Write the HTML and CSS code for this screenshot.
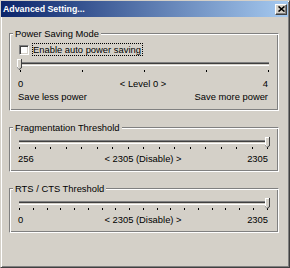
FILE: index.html
```html
<!DOCTYPE html>
<html lang="en">
<head>
    <meta charset="UTF-8">
    <title>Advanced Setting...</title>
    <link rel="stylesheet" href="styles.css">
</head>
<body>
    <div class="window">
        <div class="titlebar">
            <span class="title">Advanced Setting...</span>
            <span class="close">
                <svg width="7" height="6" viewBox="0 0 7 6"><path d="M0.5 0.5L6.5 5.5M6.5 0.5L0.5 5.5" stroke="#000" stroke-width="1.6"/></svg>
            </span>
        </div>

        <div class="content">
            <div class="group power">
                <div class="legend">Power Saving Mode</div>
                <label class="check">
                    <span class="box"></span>
                    <span class="focus">Enable auto power saving</span>
                </label>
                <div class="slider">
                    <span class="thumb at-start">
                        <svg width="5" height="11" viewBox="0 0 5 11"><path d="M0 0h5v8.5L2.5 11 0 8.5z" fill="#404040"/><path d="M0 0h4v8l-2 2-2-2z" fill="#fff"/><path d="M1 1h3v7l-1.5 1.5L1 8z" fill="#d4d0c8"/></svg>
                    </span>
                </div>
                <div class="ticks">
                    <span></span><span></span><span></span><span></span><span></span>
                </div>
                <div class="labels">
                    <span>0</span><span>&lt; Level 0 &gt;</span><span>4</span>
                </div>
                <div class="labels">
                    <span>Save less power</span><span></span><span>Save more power</span>
                </div>
            </div>

            <div class="group">
                <div class="legend">Fragmentation Threshold</div>
                <div class="slider">
                    <span class="thumb at-end">
                        <svg width="5" height="11" viewBox="0 0 5 11"><path d="M0 0h5v8.5L2.5 11 0 8.5z" fill="#404040"/><path d="M0 0h4v8l-2 2-2-2z" fill="#fff"/><path d="M1 1h3v7l-1.5 1.5L1 8z" fill="#d4d0c8"/></svg>
                    </span>
                </div>
                <div class="ticks">
                    <span></span><span></span><span></span><span></span><span></span><span></span>
                    <span></span><span></span><span></span><span></span><span></span><span></span>
                    <span></span><span></span><span></span><span></span><span></span>
                </div>
                <div class="labels">
                    <span>256</span><span>&lt; 2305 (Disable) &gt;</span><span>2305</span>
                </div>
            </div>

            <div class="group">
                <div class="legend">RTS / CTS Threshold</div>
                <div class="slider">
                    <span class="thumb at-end">
                        <svg width="5" height="11" viewBox="0 0 5 11"><path d="M0 0h5v8.5L2.5 11 0 8.5z" fill="#404040"/><path d="M0 0h4v8l-2 2-2-2z" fill="#fff"/><path d="M1 1h3v7l-1.5 1.5L1 8z" fill="#d4d0c8"/></svg>
                    </span>
                </div>
                <div class="ticks">
                    <span></span><span></span><span></span><span></span><span></span><span></span><span></span>
                    <span></span><span></span><span></span><span></span><span></span><span></span>
                    <span></span><span></span><span></span><span></span><span></span><span></span>
                </div>
                <div class="labels">
                    <span>0</span><span>&lt; 2305 (Disable) &gt;</span><span>2305</span>
                </div>
            </div>
        </div>
    </div>
</body>
</html>
```

FILE: styles.css
```css
body {
    margin: 0;
    font-family: "Liberation Sans", Arial, sans-serif;
    font-size: 9.4px;
    color: #000;
}
.window {
    width: 290px;
    height: 268px;
    box-sizing: border-box;
    background: #d4d0c8;
    border: 1px solid;
    border-color: #d4d0c8 #404040 #404040 #d4d0c8;
    box-shadow: inset 1px 1px #fff, inset -1px -1px #808080;
    padding-right: 1px;
}
.titlebar {
    height: 16px;
    display: flex;
    align-items: center;
    justify-content: space-between;
    background: linear-gradient(to right, #0a246a, #a6caf0);
    padding-left: 2px;
}
.title {
    color: #fff;
    font-weight: bold;
    font-size: 8.8px;
}
.close {
    width: 12px;
    height: 11px;
    box-sizing: border-box;
    margin-right: 1px;
    background: #d4d0c8;
    border: 1px solid;
    border-color: #fff #404040 #404040 #fff;
    box-shadow: inset -1px -1px #808080;
    display: flex;
    align-items: center;
    justify-content: center;
}
.close svg {
    display: block;
}
.content {
    padding: 16px 9px 0 8px;
}
.group {
    border: 1px solid;
    border-color: #808080 #fff #fff #808080;
    box-shadow: inset 1px 1px #fff, inset -1px -1px #808080;
    padding-bottom: 6px;
}
.group + .group {
    margin-top: 16px;
}
.group.power {
    padding-bottom: 7px;
    margin-bottom: 1px;
}
.legend {
    width: fit-content;
    margin: -7px 0 0 3px;
    padding: 0 2px;
    line-height: 13px;
    background: #d4d0c8;
}
.check {
    display: flex;
    align-items: center;
    gap: 3px;
    margin: 3px 0 0 9px;
}
.box {
    width: 10px;
    height: 10px;
    box-sizing: border-box;
    background: #fff;
    border: 1px solid;
    border-color: #808080 #fff #fff #808080;
    box-shadow: inset 1px 1px #404040, inset -1px -1px #d4d0c8;
}
.focus {
    border: 1px dotted #000;
    padding-right: 1px;
    line-height: 11px;
}
.slider {
    position: relative;
    height: 4px;
    margin: 6px 10px 0 9px;
    background: linear-gradient(#808080 0 1px, #404040 1px 2px, #d4d0c8 2px 3px, #fff 3px);
}
.power .slider {
    margin-left: 10px;
    margin-right: 9px;
}
.thumb {
    position: absolute;
    top: -3px;
}
.thumb svg {
    display: block;
}
.thumb.at-start {
    left: -3px;
}
.thumb.at-end {
    right: -2px;
}
.ticks {
    display: flex;
    justify-content: space-between;
    height: 2px;
    margin: 3px 10px 0 9px;
}
.power .ticks {
    margin: 4px 9px 0 10px;
}
.ticks span {
    width: 1px;
    height: 2px;
    background: #000;
}
.labels {
    display: grid;
    grid-template-columns: 1fr auto 1fr;
    line-height: 13px;
    padding: 0 10px 0 8px;
    margin-top: 3px;
}
.power .labels {
    margin-top: 5px;
}
.power .labels + .labels {
    margin-top: 0;
}
.labels span:last-child {
    justify-self: end;
}
```
